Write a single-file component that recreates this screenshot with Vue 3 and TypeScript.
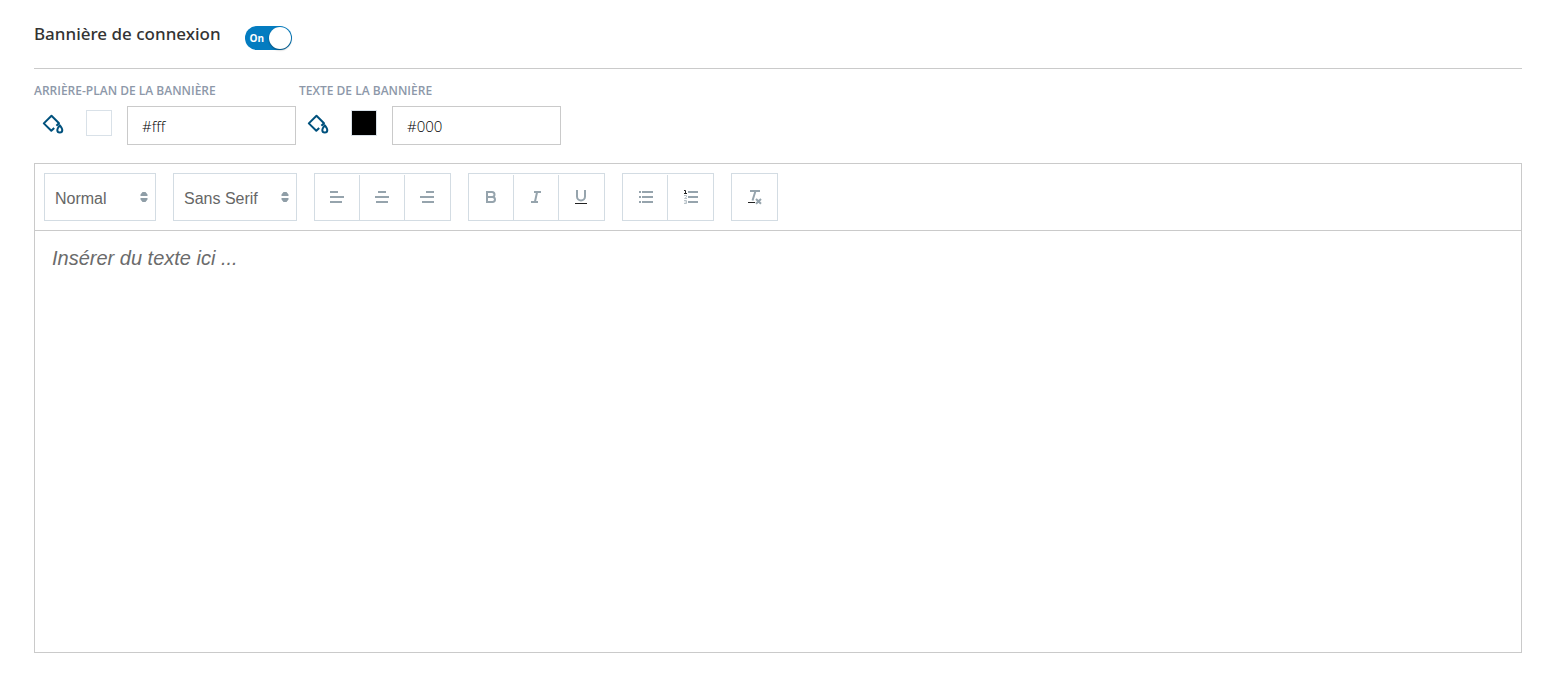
<script setup lang="ts">
import { ref } from 'vue'

interface ColorField {
  id: string
  label: string
  value: string
}

interface Tool {
  name: string
  title: string
}

const enabled = ref(true)
const message = ref('')
const heading = ref('Normal')
const font = ref('Sans Serif')

const colors = ref<ColorField[]>([
  { id: 'banner-background', label: 'Arrière-plan de la bannière', value: '#fff' },
  { id: 'banner-text', label: 'Texte de la bannière', value: '#000' },
])

const groups: Tool[][] = [
  [
    { name: 'left', title: 'Aligner à gauche' },
    { name: 'center', title: 'Centrer' },
    { name: 'right', title: 'Aligner à droite' },
  ],
  [
    { name: 'bold', title: 'Gras' },
    { name: 'italic', title: 'Italique' },
    { name: 'underline', title: 'Souligné' },
  ],
  [
    { name: 'bullet', title: 'Liste à puces' },
    { name: 'ordered', title: 'Liste numérotée' },
  ],
  [{ name: 'clean', title: 'Effacer la mise en forme' }],
]
</script>

<template>
  <main class="page">
    <header class="header">
      <label class="title" for="banner-switch">Bannière de connexion</label>
      <span class="switch">
        <input id="banner-switch" v-model="enabled" class="switch-input" type="checkbox" role="switch" />
        <span v-if="enabled" class="switch-text">On</span>
      </span>
    </header>

    <section class="colors">
      <div v-for="color in colors" :key="color.id" class="color">
        <label class="color-label" :for="color.id">{{ color.label }}</label>
        <div class="color-row">
          <svg class="bucket" viewBox="0 0 22 22" aria-hidden="true">
            <path d="M14.4 12.8 17 10.2 9.5 2.8 1.8 10.4 9.3 17.8 12.2 15" />
            <path d="M17.8 12.2C16.8 13.8 15.3 15.3 15.3 17.1a2.5 2.5 0 0 0 5 0C20.3 15.3 18.8 13.8 17.8 12.2Z" />
          </svg>
          <span class="swatch" :style="{ backgroundColor: color.value }"></span>
          <input :id="color.id" v-model="color.value" class="color-input" type="text" />
        </div>
      </div>
    </section>

    <section class="editor">
      <div class="toolbar" role="toolbar">
        <span class="picker">
          <select v-model="heading" class="select heading" aria-label="Style de paragraphe">
            <option>Normal</option>
          </select>
          <svg class="arrows" viewBox="0 0 8 12" aria-hidden="true">
            <path d="M.5 5V3.5L2.5 1h3l2 2.5V5ZM.5 7v1.5L2.5 11h3l2-2.5V7Z" />
          </svg>
        </span>
        <span class="picker">
          <select v-model="font" class="select font" aria-label="Police">
            <option>Sans Serif</option>
          </select>
          <svg class="arrows" viewBox="0 0 8 12" aria-hidden="true">
            <path d="M.5 5V3.5L2.5 1h3l2 2.5V5ZM.5 7v1.5L2.5 11h3l2-2.5V7Z" />
          </svg>
        </span>
        <div v-for="(group, index) in groups" :key="index" class="group">
          <button v-for="tool in group" :key="tool.name" class="tool" type="button" :aria-label="tool.title">
            <svg class="icon" viewBox="0 0 18 18" aria-hidden="true">
              <path v-if="tool.name === 'left'" d="M2 4h8M2 9h14M2 14h12" />
              <path v-else-if="tool.name === 'center'" d="M5 4h8M2 9h14M3 14h12" />
              <path v-else-if="tool.name === 'right'" d="M8 4h8M2 9h14M4 14h12" />
              <path v-else-if="tool.name === 'bold'" d="M5 4h5a2.5 2.5 0 0 1 0 5H5ZM5 9h5.5a2.5 2.5 0 0 1 0 5H5Z" />
              <path v-else-if="tool.name === 'italic'" d="M7 4h7M4 14h7M10 4.5 8 13.5" />
              <g v-else-if="tool.name === 'underline'">
                <path d="M5 2v6.5a4 4 0 0 0 8 0V2" />
                <path class="dark" d="M3 15.5h12" />
              </g>
              <path v-else-if="tool.name === 'bullet'" d="M6 4h11M6 9h11M6 14h11M3 4h2M3 9h2M3 14h2" />
              <g v-else-if="tool.name === 'ordered'">
                <path d="M7 4h10M7 9h10M7 14h10" />
                <path class="dark" d="M3 2.5h1.5V6M3 5.5h3" />
                <path class="faint" d="M3 7.5h2.5v1.5L3.5 10.5H6M3 12.5h2.5v3H3M3.5 14h2" />
              </g>
              <g v-else>
                <path d="M5 3h10M10.5 3 7.5 12.5" />
                <path class="cross" d="M11 11 16 15.8M16 11 11 15.8" />
                <path class="dark" d="M3 14.5h7" />
              </g>
            </svg>
          </button>
        </div>
      </div>
      <textarea v-model="message" class="message" placeholder="Insérer du texte ici ..." aria-label="Texte de la bannière de connexion"></textarea>
    </section>
  </main>
</template>

<style>
body {
  background: #fff;
}
</style>

<style scoped>
.page,
.page * {
  box-sizing: border-box;
}

.page {
  display: flex;
  flex-direction: column;
  min-height: 100vh;
  padding: 0 31px 29px 34px;
  font-family: 'Open Sans', 'Noto Sans', sans-serif;
}

.header {
  display: flex;
  align-items: flex-start;
  gap: 24px;
  padding: 22px 0 18px;
  border-bottom: 1px solid #cacaca;
}

.title {
  font-family: 'Noto Sans', 'Open Sans', sans-serif;
  font-size: 17px;
  line-height: 24px;
  font-weight: 500;
  color: #333;
}

.switch {
  position: relative;
  display: block;
  margin-top: 4px;
  width: 47px;
  height: 24px;
}

.switch-input {
  appearance: none;
  display: block;
  width: 100%;
  height: 100%;
  margin: 0;
  border-radius: 12px;
  background: #a9b3bc;
}

.switch-input:checked {
  background: #047cc0;
}

.switch-input::after {
  content: '';
  position: absolute;
  top: 1px;
  left: 1px;
  width: 22px;
  height: 22px;
  border-radius: 50%;
  background: #fff;
  box-shadow: 0 1px 2px rgba(0, 0, 0, 0.4);
}

.switch-input:checked::after {
  left: 24px;
}

.switch-text {
  position: absolute;
  top: 0;
  left: 5px;
  font-size: 10px;
  line-height: 24px;
  font-weight: 700;
  color: #fff;
  pointer-events: none;
}

.colors {
  display: flex;
  gap: 3px;
  padding: 13px 0 18px;
}

.color-label {
  display: block;
  font-size: 12px;
  line-height: 18px;
  font-weight: 600;
  text-transform: uppercase;
  color: #8d98a9;
}

.color-row {
  display: flex;
  align-items: flex-start;
  margin-top: 6px;
}

.bucket {
  width: 22px;
  height: 22px;
  margin: 7px 22px 0 8px;
  fill: none;
  stroke: #00517d;
  stroke-width: 2;
  stroke-linejoin: round;
}

.swatch {
  width: 26px;
  height: 26px;
  margin: 4px 15px 0 0;
  border: 1px solid #d9e1e8;
}

.color-input {
  width: 169px;
  height: 39px;
  padding: 0 14px;
  border: 1px solid #cacaca;
  border-radius: 0;
  background: #fff;
  font-family: inherit;
  font-size: 15px;
  font-weight: 300;
  color: #000;
}

.editor {
  flex: 1;
  display: flex;
  flex-direction: column;
  border: 1px solid #cacaca;
}

.toolbar {
  display: flex;
  flex-wrap: wrap;
  gap: 17px;
  padding: 9px;
  border-bottom: 1px solid #cacaca;
}

.picker {
  position: relative;
  display: flex;
}

.select {
  appearance: none;
  height: 48px;
  padding: 2px 10px 0;
  border: 1px solid #d3dce3;
  border-radius: 0;
  background: #fff;
  font-family: 'Liberation Sans', Arial, sans-serif;
  font-size: 16px;
  color: #666;
}

.heading {
  width: 112px;
}

.font {
  width: 124px;
}

.arrows {
  position: absolute;
  top: 18px;
  right: 8px;
  width: 8px;
  height: 12px;
  fill: #8f9ea7;
  pointer-events: none;
}

.group {
  display: flex;
  height: 48px;
  border: 1px solid #d3dce3;
}

.tool {
  display: flex;
  align-items: center;
  justify-content: center;
  width: 45px;
  margin: 1px 0 0;
  padding: 0 0 1px;
  border: 0;
  border-right: 1px solid #d3dce3;
  background: none;
}

.tool:last-child {
  border-right-color: transparent;
}

.icon {
  width: 18px;
  height: 18px;
  fill: none;
  stroke: #96a4ad;
  stroke-width: 2;
}

.dark {
  stroke: #222;
  stroke-width: 1;
}

.faint {
  stroke: #b9c3c9;
  stroke-width: 1;
}

.cross {
  stroke-width: 2;
}

.message {
  flex: 1;
  display: block;
  width: 100%;
  padding: 15px 17px;
  border: 0;
  outline: 0;
  resize: none;
  background: #fff;
  font-family: 'Liberation Sans', Arial, sans-serif;
  font-size: 20px;
  line-height: 24px;
  color: #333;
}

.message::placeholder {
  font-style: italic;
  color: #6b6b6b;
  opacity: 1;
}
</style>
